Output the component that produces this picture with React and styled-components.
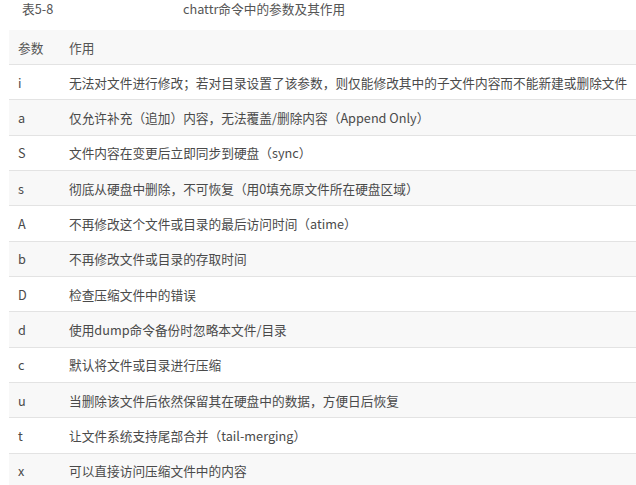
import React from "react";
import styled, { createGlobalStyle } from "styled-components";

const rows = [
  ["i", "无法对文件进行修改；若对目录设置了该参数，则仅能修改其中的子文件内容而不能新建或删除文件"],
  ["a", "仅允许补充（追加）内容，无法覆盖/删除内容（Append Only）"],
  ["S", "文件内容在变更后立即同步到硬盘（sync）"],
  ["s", "彻底从硬盘中删除，不可恢复（用0填充原文件所在硬盘区域）"],
  ["A", "不再修改这个文件或目录的最后访问时间（atime）"],
  ["b", "不再修改文件或目录的存取时间"],
  ["D", "检查压缩文件中的错误"],
  ["d", "使用dump命令备份时忽略本文件/目录"],
  ["c", "默认将文件或目录进行压缩"],
  ["u", "当删除该文件后依然保留其在硬盘中的数据，方便日后恢复"],
  ["t", "让文件系统支持尾部合并（tail-merging）"],
  ["x", "可以直接访问压缩文件中的内容"],
];

function App() {
  return (
    <Page>
      <GlobalStyle />
      <Caption>
        <CaptionNo>表5-8</CaptionNo>
        <CaptionTitle>chattr命令中的参数及其作用</CaptionTitle>
      </Caption>
      <Table>
        <thead>
          <Row>
            <HeadCell>参数</HeadCell>
            <HeadCell>作用</HeadCell>
          </Row>
        </thead>
        <tbody>
          {rows.map(([flag, desc], i) => (
            <Row key={flag + i} $shaded={i % 2 === 1}>
              <Cell>{flag}</Cell>
              <Cell>{desc}</Cell>
            </Row>
          ))}
        </tbody>
      </Table>
    </Page>
  );
}

export default App;

const GlobalStyle = createGlobalStyle`
  body {
    margin: 0;
    background: #ffffff;
    overflow: hidden;
    font-family: "Noto Sans CJK SC", "Open Sans", sans-serif;
  }
`;

const Page = styled.div`
  width: 636px;
  box-sizing: border-box;
  padding-left: 9px;
`;

const Caption = styled.div`
  display: flex;
  height: 30px;
  align-items: flex-start;
  font-size: 12.7px;
  line-height: 17px;
  color: #555555;
`;

const CaptionNo = styled.span`
  margin-left: 13px;
  width: 161px;
`;

const CaptionTitle = styled.span``;

const Table = styled.table`
  width: 100%;
  border-collapse: collapse;
  table-layout: fixed;
  font-size: 12.7px;
  color: #4a4a4a;
`;

const Row = styled.tr`
  height: 35.33px;
  background: ${(p) => (p.$shaded ? "#f8f8f8" : "#ffffff")};
  border-bottom: 1px solid #e3e3e3;

  thead & {
    background: #f8f8f8;
    height: 34.5px;
  }
`;

const HeadCell = styled.th`
  text-align: left;
  font-weight: normal;
  padding: 0 0 0 9px;
  color: #555555;

  &:first-child {
    width: 42px;
  }
`;

const Cell = styled.td`
  padding: 0 0 0 9px;
  white-space: nowrap;

  &:first-child {
    width: 42px;
  }
`;
